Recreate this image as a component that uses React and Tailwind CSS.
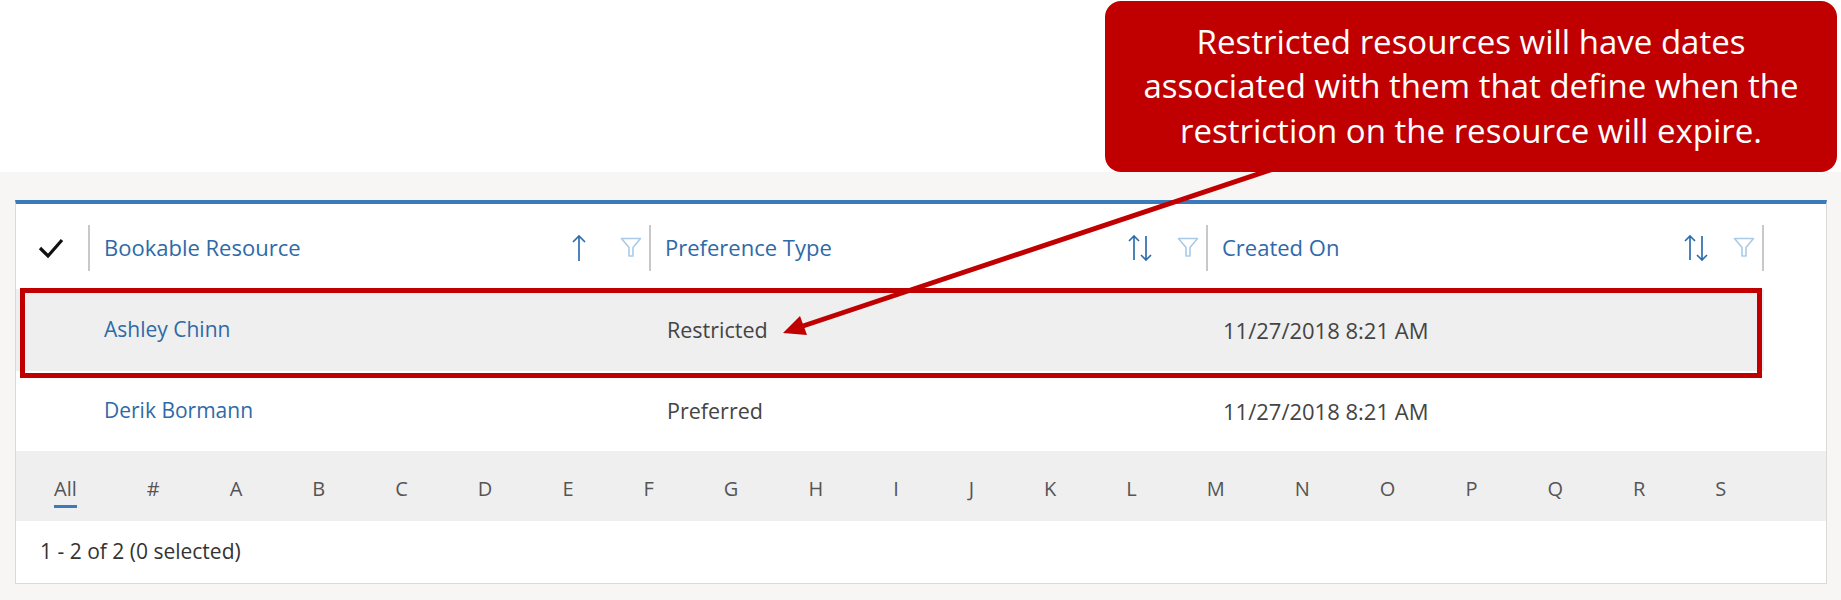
import React from "react";

const LETTERS = ["All", "#", "A", "B", "C", "D", "E", "F", "G", "H", "I", "J", "K", "L", "M", "N", "O", "P", "Q", "R", "S"];

function CheckMark() {
  return (
    <svg width="26" height="22" viewBox="0 0 26 22" fill="none">
      <polyline points="2,11 10,19 24,3" stroke="#111" strokeWidth="3.2" strokeLinejoin="miter" />
    </svg>
  );
}

function SortUp() {
  return (
    <svg width="16" height="28" viewBox="0 0 16 28" fill="none" stroke="#2f6ead" strokeWidth="1.7">
      <path d="M8 2v25M2 8l6-6 6 6" />
    </svg>
  );
}

function SortBoth() {
  return (
    <svg width="24" height="28" viewBox="0 0 24 28" fill="none" stroke="#2f6ead" strokeWidth="1.7">
      <path d="M6 2v24M1 7l5-5 5 5" />
      <path d="M18 2v24M13 21l5 5 5-5" />
    </svg>
  );
}

function Funnel() {
  return (
    <svg width="22" height="21" viewBox="0 0 22 21" fill="none" stroke="#a9cbe7" strokeWidth="1.6">
      <path d="M1.5 1.5h19l-7.5 9v8.5h-4v-8.5z" strokeLinejoin="round" />
    </svg>
  );
}

function HeaderCol({ title, sort, width, gap }) {
  return (
    <div className={`flex items-center ${width} h-full`}>
      <div className="flex items-center flex-1 pl-[14px] pr-[7px] h-full">
        <span className="text-[22px] text-[#2e6aa7]">{title}</span>
        <div className="ml-auto w-[24px] flex justify-center">{sort}</div>
        <div className={gap}>
          <Funnel />
        </div>
      </div>
      <div className="w-[2px] h-[46px] bg-[#c8c8c8]" />
    </div>
  );
}

function Row({ name, type, created, highlight, height }) {
  return (
    <div className={`flex items-center w-[1748px] ${height} ${highlight ? "bg-[#efefef]" : ""}`}>
      <div className="w-[74px]" />
      <div className="w-[561px] pl-[14px] text-[21px] text-[#2e6aa7]">{name}</div>
      <div className="w-[557px] pl-[16px] text-[21.5px] text-[#444]">{type}</div>
      <div className="w-[556px] pl-[15px] text-[22px] text-[#444]">{created}</div>
    </div>
  );
}

export default function App() {
  return (
    <div className="relative w-[1841px] h-[600px] overflow-hidden bg-white font-['Open_Sans',sans-serif]">
      {/* callout */}
      <div className="h-[172px] flex justify-end pt-[1px] pr-[4px]">
        <div className="w-[732px] h-[171px] rounded-[16px] bg-[#c00000] flex items-center justify-center text-center text-white text-[33px] leading-[44.5px]">
          <p>
            Restricted resources will have dates
            <br />
            associated with them that define when the
            <br />
            restriction on the resource will expire.
          </p>
        </div>
      </div>

      {/* grid area */}
      <div className="h-[428px] bg-[#f7f6f5] pt-[28px] pl-[15px]">
        <div className="w-[1812px] bg-white border-t-[4px] border-t-[#3b7abb] border-x border-x-[#dadada] border-b border-b-[#dadada]">
          {/* header */}
          <div className="flex items-center h-[85px] pt-[2px]">
            <div className="w-[72px] pl-[22px] flex items-center">
              <CheckMark />
            </div>
            <div className="w-[2px] h-[46px] bg-[#c8c8c8]" />
            <HeaderCol title="Bookable Resource" sort={<SortUp />} width="w-[561px]" gap="ml-[29px]" />
            <HeaderCol title="Preference Type" sort={<SortBoth />} width="w-[557px]" gap="ml-[25px]" />
            <HeaderCol title="Created On" sort={<SortBoth />} width="w-[556px]" gap="ml-[25px]" />
          </div>

          <Row name="Ashley Chinn" type="Restricted" created="11/27/2018 8:21 AM" highlight height="h-[82px]" />
          <Row name="Derik Bormann" type="Preferred" created="11/27/2018 8:21 AM" height="h-[80px]" />

          {/* jump bar */}
          <div className="h-[70px] bg-[#efefef] flex items-center pt-[5px] pl-[38px] gap-[70px] text-[20px] text-[#555]">
            {LETTERS.map((l) => (
              <span key={l} className="relative">
                {l}
                {l === "All" && <span className="absolute left-0 right-0 -bottom-[4px] h-[3px] bg-[#3b7abb]" />}
              </span>
            ))}
          </div>

          {/* footer */}
          <div className="h-[62px] flex items-center pl-[24px] text-[21px] text-[#333]">1 - 2 of 2 (0 selected)</div>
        </div>
      </div>

      {/* red highlight box */}
      <div className="absolute left-[20px] top-[288px] w-[1742px] h-[90px] border-[5px] border-[#c00000]" />

      {/* arrow */}
      <svg className="absolute inset-0 pointer-events-none" width="1841" height="600">
        <line x1="1276" y1="168" x2="803" y2="326" stroke="#c00000" strokeWidth="5" />
        <polygon points="783,333 807,335 800,316" fill="#c00000" />
      </svg>
    </div>
  );
}
